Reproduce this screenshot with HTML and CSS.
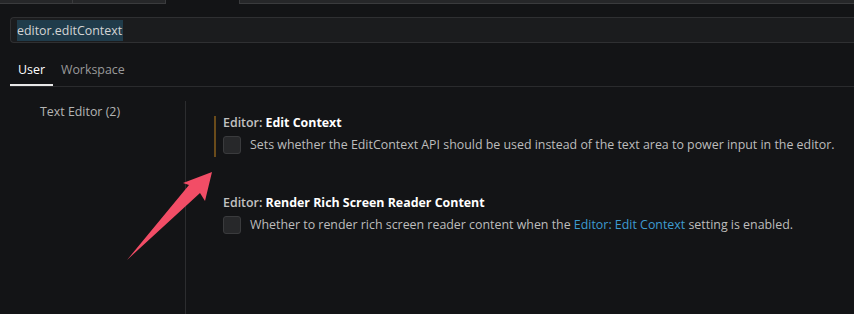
FILE: index.html
```html
<!DOCTYPE html>
<html lang="en">
<head>
    <meta charset="UTF-8">
    <meta name="viewport" content="width=device-width, initial-scale=1.0">
    <title>Settings</title>
    <link rel="stylesheet" href="styles.css">
</head>
<body>
    <!-- Bottom edge of the editor tabs -->
    <div class="tab-strip">
        <div class="strip-tab tab-a"></div>
        <div class="strip-tab tab-b"></div>
        <div class="strip-gap"></div>
        <div class="strip-tab tab-c"></div>
    </div>

    <div class="search-box">
        <span class="search-text">editor.editContext</span>
    </div>

    <div class="scope-tabs">
        <div class="scope-tab active">User</div>
        <div class="scope-tab">Workspace</div>
    </div>

    <div class="settings-body">
        <!-- Left: table of contents -->
        <div class="toc">
            <div class="toc-item">Text Editor (2)</div>
        </div>

        <!-- Right: matching settings -->
        <div class="settings-list">
            <div class="setting-item modified">
                <div class="setting-title"><span class="category">Editor: </span>Edit Context</div>
                <div class="setting-row">
                    <span class="checkbox"></span>
                    <span class="setting-desc">Sets whether the EditContext API should be used instead of the text area to power input in the editor.</span>
                </div>
            </div>
            <div class="setting-item">
                <div class="setting-title"><span class="category">Editor: </span>Render Rich Screen Reader Content</div>
                <div class="setting-row">
                    <span class="checkbox"></span>
                    <span class="setting-desc">Whether to render rich screen reader content when the <a class="setting-link">Editor: Edit Context</a> setting is enabled.</span>
                </div>
            </div>
        </div>
    </div>

    <!-- Annotation arrow drawn over the screenshot -->
    <svg class="arrow" width="854" height="314" viewBox="0 0 854 314">
        <polygon points="127,260 200,193 205,201 212,172 183,183 189,185" fill="#f24d66"/>
    </svg>
</body>
</html>
```

FILE: styles.css
```css
body {
    margin: 0;
    padding: 0;
    width: 854px;
    height: 314px;
    overflow: hidden;
    background-color: #131416;
    font-family: "Open Sans", "Noto Sans", sans-serif;
    font-size: 12.4px;
    color: #cccccc;
    position: relative;
}

/* Tab strip at the very top */
.tab-strip {
    display: flex;
    height: 4px;
}

.strip-tab {
    background: #262729;
    border-bottom: 1px solid #3a3b3d;
    box-sizing: border-box;
}

.tab-a {
    width: 73px;
    border-right: 1px solid #3a3b3d;
}

.tab-b {
    width: 93px;
    border-right: 1px solid #3a3b3d;
}

.strip-gap {
    width: 73px;
}

.tab-c {
    flex: 1;
    border-left: 1px solid #3a3b3d;
}

/* Search input */
.search-box {
    margin: 13px 0 0 10px;
    height: 24px;
    border: 1px solid #2f3032;
    border-right: none;
    border-radius: 4px 0 0 4px;
    background: #1b1c1e;
    display: flex;
    align-items: center;
    padding-left: 6px;
}

.search-text {
    background: #203c4b;
    color: #d4d4d4;
    line-height: 21px;
    padding: 0 1px 0 0;
}

/* User / Workspace tabs */
.scope-tabs {
    display: flex;
    margin: 13px 0 0 10px;
    border-bottom: 1px solid #2a2b2d;
}

.scope-tab {
    padding: 6px 8px 6px;
    line-height: 16px;
    color: #9a9a9a;
    border-bottom: 2px solid transparent;
}

.scope-tab.active {
    color: #ffffff;
    border-bottom-color: #e8e8e8;
}

/* Body of the settings editor */
.settings-body {
    display: flex;
    margin-top: 14px;
    height: 214px;
}

.toc {
    width: 186px;
    border-right: 1px solid #2c2d2f;
    box-sizing: border-box;
}

.toc-item {
    padding-left: 40px;
    line-height: 22px;
    color: #b4b4b4;
}

.settings-list {
    flex: 1;
    padding: 15px 0 0 28px;
}

.setting-item {
    border-left: 2px solid transparent;
    padding: 0 0 0 7px;
    margin-bottom: 39px;
}

.setting-item.modified {
    border-left-color: #6a4b1a;
}

.setting-title {
    font-weight: 700;
    color: #ffffff;
    line-height: 14px;
}

.category {
    font-weight: 600;
    color: #c2c2c2;
}

.setting-row {
    display: flex;
    align-items: center;
    margin-top: 6px;
    padding-bottom: 3px;
}

.checkbox {
    width: 16px;
    height: 16px;
    border: 1px solid #3a3b3d;
    border-radius: 3px;
    background: #27282a;
    margin-right: 9px;
    flex-shrink: 0;
}

.setting-desc {
    color: #bdbdbd;
    line-height: 18px;
}

.setting-link {
    color: #3e9bd0;
}

.arrow {
    position: absolute;
    left: 0;
    top: 0;
    pointer-events: none;
}
```
